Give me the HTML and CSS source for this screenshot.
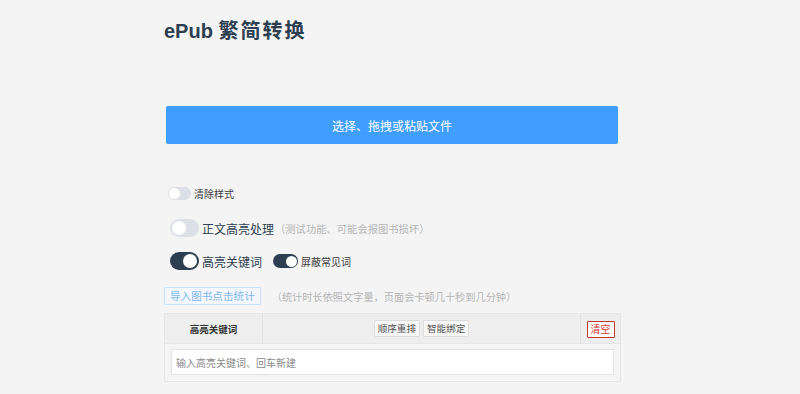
FILE: index.html
```html
<!DOCTYPE html>
<html lang="zh">
<head>
<meta charset="utf-8">
<title>ePub 繁简转换</title>
<link rel="stylesheet" href="styles.css">
</head>
<body>
<div class="page">
  <h1 class="title">ePub <span class="cjk">繁简转换</span></h1>
  <div class="upload">选择、拖拽或粘贴文件</div>

  <div class="opt opt-small">
    <span class="sw sw-s"><span class="knob"></span></span>
    <span class="lbl-s">清除样式</span>
  </div>

  <div class="opt opt-big">
    <span class="sw sw-l"><span class="knob"></span></span>
    <span class="lbl-l">正文高亮处理</span>
    <span class="hint">（测试功能、可能会报图书损坏）</span>
  </div>

  <div class="opt opt-big">
    <span class="sw sw-l on"><span class="knob"></span></span>
    <span class="lbl-l">高亮关键词</span>
    <span class="sw sw-m on"><span class="knob"></span></span>
    <span class="lbl-s">屏蔽常见词</span>
  </div>

  <div class="stat">
    <span class="stat-btn">导入图书点击统计</span>
    <span class="hint">（统计时长依照文字量，页面会卡顿几十秒到几分钟）</span>
  </div>

  <div class="table">
    <div class="thead">
      <div class="c1">高亮关键词</div>
      <div class="c2"><span class="mini">顺序重排</span><span class="mini">智能绑定</span></div>
      <div class="c3"><span class="clear">清空</span></div>
    </div>
    <div class="tbody">
      <div class="input">输入高亮关键词、回车新建</div>
    </div>
  </div>
</div>
</body>
</html>
```

FILE: styles.css
```css
html, body {
  margin: 0;
  padding: 0;
  background: #f4f4f4;
  font-family: "Liberation Sans", "Noto Sans CJK SC", sans-serif;
  color: #2c3e50;
}
.page {
  width: 456px;
  margin-left: 164px;
  display: flex;
  flex-direction: column;
  align-items: flex-start;
}
.title {
  margin: 17px 0 0 0;
  font-size: 20px;
  line-height: 28px;
  font-weight: bold;
  color: #2c3e50;
}
.title .cjk {
  letter-spacing: 2px;
}
.upload {
  margin: 61px 0 0 2px;
  width: 452px;
  height: 38px;
  background: #409eff;
  border-radius: 2px;
  color: #fff;
  font-size: 12px;
  display: flex;
  align-items: center;
  justify-content: center;
}
.opt {
  display: flex;
  align-items: center;
}
.opt-small {
  margin: 42px 0 0 4px;
  height: 14px;
}
.opt-big {
  margin: 18px 0 0 6px;
  height: 20px;
}
.opt-big + .opt-big {
  margin-top: 13px;
}
.sw {
  position: relative;
  display: inline-block;
  background: #dcdfe6;
  flex: none;
}
.sw .knob {
  position: absolute;
  background: #fff;
  border-radius: 50%;
}
.sw-s { width: 23px; height: 13px; border-radius: 7px; }
.sw-s .knob { width: 11px; height: 11px; left: 1px; top: 1px; }
.sw-l { width: 29px; height: 18px; border-radius: 9px; }
.sw-l .knob { width: 14px; height: 14px; left: 2px; top: 2px; }
.sw-m { width: 25px; height: 14px; border-radius: 7px; margin-left: 11px; }
.sw-m .knob { width: 11px; height: 11px; left: 1.5px; top: 1.5px; }
.sw.on { background: #2c3e50; }
.sw-l.on .knob { left: 13px; }
.sw-m.on .knob { left: 12.5px; }
.lbl-s {
  font-size: 10px;
  margin-left: 3px;
  color: #3a3a3a;
}
.lbl-l {
  font-size: 12px;
  margin-left: 3px;
  color: #2c3e50;
}
.hint {
  font-size: 10.3px;
  color: #b4b4b4;
}
.opt-big .hint {
  margin-left: 1px;
}
.stat {
  margin-top: 16px;
  display: flex;
  align-items: center;
}
.stat-btn {
  height: 16px;
  padding: 0 5px;
  border: 1px solid #c6e2ff;
  background: #f4f8fc;
  color: #7fb8f0;
  font-size: 10.6px;
  line-height: 16px;
  border-radius: 1px;
}
.stat .hint {
  margin-left: 11px;
  font-size: 10.2px;
}
.table {
  margin-top: 8px;
  width: 455px;
  border: 1px solid #e6e6e6;
  background: #f4f4f4;
}
.thead {
  display: flex;
  height: 29px;
  background: #eeeeee;
  border-bottom: 1px solid #e6e6e6;
}
.thead > div {
  display: flex;
  align-items: center;
  justify-content: center;
}
.c1 {
  width: 97px;
  font-size: 9.5px;
  font-weight: bold;
  color: #333;
  border-right: 1px solid #e2e2e2;
}
.c2 {
  flex: 1;
  gap: 3px;
  border-right: 1px solid #e2e2e2;
}
.c3 {
  width: 39px;
}
.mini {
  font-size: 9.6px;
  color: #555;
  background: #f7f7f7;
  border: 1px solid #dcdcdc;
  padding: 0 3px;
  height: 15px;
  line-height: 15px;
  border-radius: 1px;
}
.clear {
  font-size: 10px;
  color: #d9392c;
  border: 1px solid #c0392b;
  background: #fff;
  padding: 0 3px;
  height: 15px;
  line-height: 15px;
  border-radius: 1px;
  margin-top: 2px;
}
.tbody {
  padding: 5px 6px 6px 6px;
}
.input {
  height: 24px;
  background: #fff;
  border: 1px solid #e4e4e4;
  font-size: 10px;
  color: #8a8a8a;
  padding-left: 4px;
  display: flex;
  align-items: center;
}
```
